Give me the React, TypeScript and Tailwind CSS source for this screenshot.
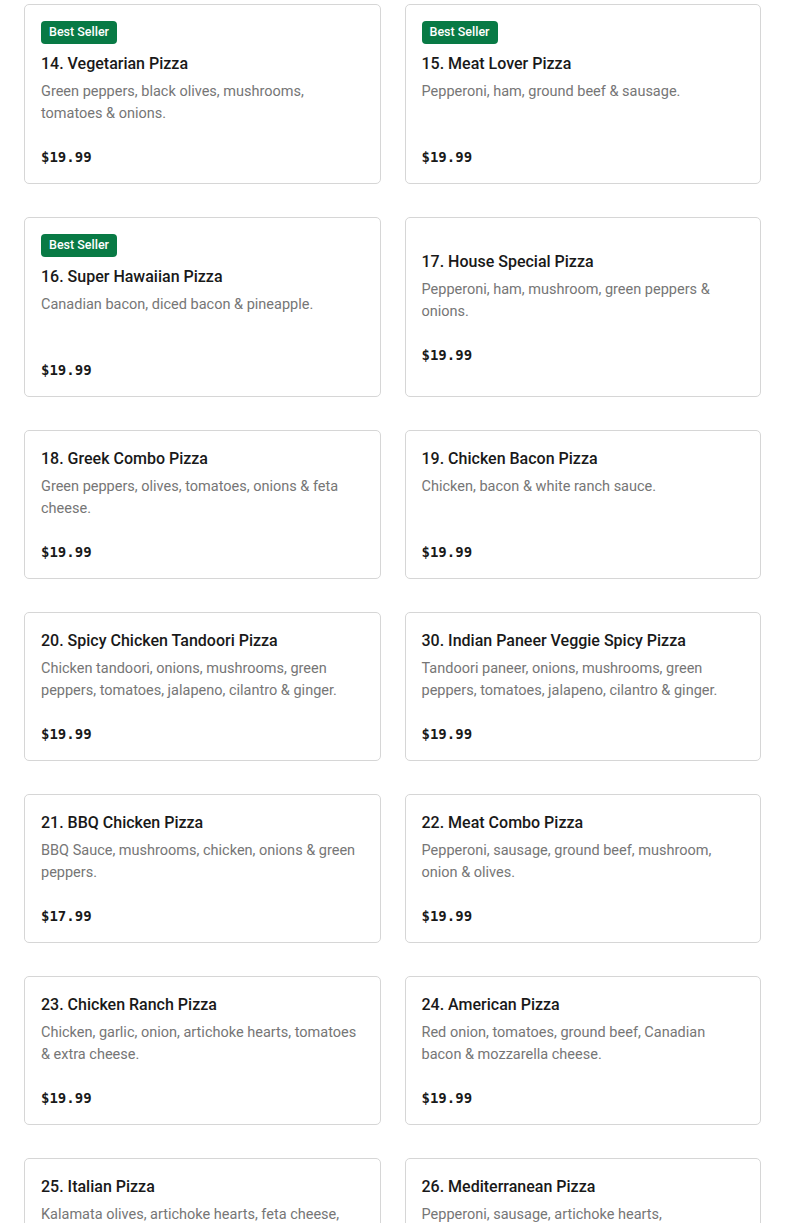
type Pizza = {
  name: string;
  desc: string;
  price: string;
  bestSeller?: boolean;
};

const rows: Pizza[][] = [
  [
    { name: '14. Vegetarian Pizza', desc: 'Green peppers, black olives, mushrooms, tomatoes & onions.', price: '$19.99', bestSeller: true },
    { name: '15. Meat Lover Pizza', desc: 'Pepperoni, ham, ground beef & sausage.', price: '$19.99', bestSeller: true },
  ],
  [
    { name: '16. Super Hawaiian Pizza', desc: 'Canadian bacon, diced bacon & pineapple.', price: '$19.99', bestSeller: true },
    { name: '17. House Special Pizza', desc: 'Pepperoni, ham, mushroom, green peppers & onions.', price: '$19.99' },
  ],
  [
    { name: '18. Greek Combo Pizza', desc: 'Green peppers, olives, tomatoes, onions & feta cheese.', price: '$19.99' },
    { name: '19. Chicken Bacon Pizza', desc: 'Chicken, bacon & white ranch sauce.', price: '$19.99' },
  ],
  [
    { name: '20. Spicy Chicken Tandoori Pizza', desc: 'Chicken tandoori, onions, mushrooms, green peppers, tomatoes, jalapeno, cilantro & ginger.', price: '$19.99' },
    { name: '30. Indian Paneer Veggie Spicy Pizza', desc: 'Tandoori paneer, onions, mushrooms, green peppers, tomatoes, jalapeno, cilantro & ginger.', price: '$19.99' },
  ],
  [
    { name: '21. BBQ Chicken Pizza', desc: 'BBQ Sauce, mushrooms, chicken, onions & green peppers.', price: '$17.99' },
    { name: '22. Meat Combo Pizza', desc: 'Pepperoni, sausage, ground beef, mushroom, onion & olives.', price: '$19.99' },
  ],
  [
    { name: '23. Chicken Ranch Pizza', desc: 'Chicken, garlic, onion, artichoke hearts, tomatoes & extra cheese.', price: '$19.99' },
    { name: '24. American Pizza', desc: 'Red onion, tomatoes, ground beef, Canadian bacon & mozzarella cheese.', price: '$19.99' },
  ],
  [
    { name: '25. Italian Pizza', desc: 'Kalamata olives, artichoke hearts, feta cheese, tomatoes & onions.', price: '$19.99' },
    { name: '26. Mediterranean Pizza', desc: 'Pepperoni, sausage, artichoke hearts, sun\u2011dried\u00a0tomatoes & feta cheese.', price: '$19.99' },
  ],
];

function PizzaCard({ pizza }: { pizza: Pizza }) {
  return (
    <div className="flex flex-col justify-center rounded-[5px] border border-[#d6d6d6] bg-white p-4">
      {pizza.bestSeller && (
        <div className="mb-2 flex">
          <span className="flex h-[23px] items-center rounded-[4px] bg-[#087a45] px-2 text-[12.5px] font-medium text-white">
            Best Seller
          </span>
        </div>
      )}
      <h3 className="text-[16px] leading-6 font-medium text-[#191919]">{pizza.name}</h3>
      <p className="mt-[5px] min-h-[44px] text-[14.5px] leading-[22px] text-[#767676]">{pizza.desc}</p>
      <p className="mt-[22px] font-['DejaVu_Sans_Mono',monospace] text-[14px] leading-5 font-bold text-[#191919]">
        {pizza.price}
      </p>
    </div>
  );
}

export default function App() {
  return (
    <div className="min-h-screen bg-white px-6 pt-1 font-['Roboto',sans-serif]">
      <div className="flex flex-col gap-[33px]">
        {rows.map((row, i) => (
          <div key={i} className="grid grid-cols-2 gap-6">
            {row.map((pizza) => (
              <PizzaCard key={pizza.name} pizza={pizza} />
            ))}
          </div>
        ))}
      </div>
    </div>
  );
}
